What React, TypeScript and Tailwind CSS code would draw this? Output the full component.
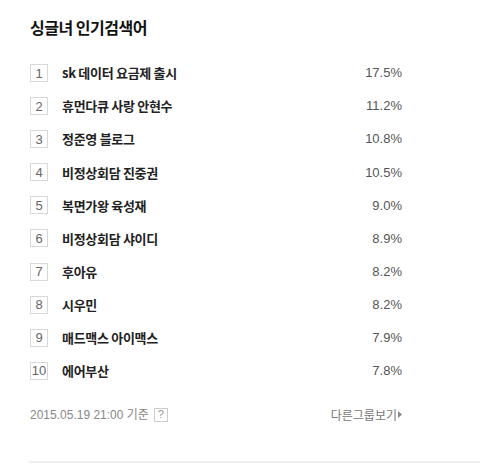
import React from "react";

const items: [string, string][] = [
  ["sk 데이터 요금제 출시", "17.5%"],
  ["휴먼다큐 사랑 안현수", "11.2%"],
  ["정준영 블로그", "10.8%"],
  ["비정상회담 진중권", "10.5%"],
  ["복면가왕 육성재", "9.0%"],
  ["비정상회담 샤이디", "8.9%"],
  ["후아유", "8.2%"],
  ["시우민", "8.2%"],
  ["매드맥스 아이맥스", "7.9%"],
  ["에어부산", "7.8%"],
];

export default function App() {
  return (
    <div className="w-[480px] h-[464px] bg-white overflow-hidden" style={{ fontFamily: '"Noto Sans CJK KR", "Noto Sans", sans-serif' }}>
      <div className="pl-[30px] pr-[78px] pt-[16px]">
        <h1 className="text-[16px] font-bold text-[#111] leading-[22px] tracking-[-0.5px]">싱글녀 인기검색어</h1>
        <ul className="mt-[26px] flex flex-col gap-[15.1px]">
          {items.map(([t, p], i) => (
            <li key={i} className="flex items-center h-[18px]">
              <span
                className="w-[18px] h-[18px] border border-[#d8d8d8] flex items-center justify-center text-[13px] text-[#666] leading-none"
                style={{ fontFamily: '"Liberation Sans", Arial, sans-serif' }}
              >
                {i + 1}
              </span>
              <span className="ml-[14px] text-[13px] font-bold text-[#222] tracking-[-0.3px] flex-1">{t}</span>
              <span
                className="text-[13px] text-[#555]"
                style={{ fontFamily: '"Liberation Sans", Arial, sans-serif' }}
              >
                {p}
              </span>
            </li>
          ))}
        </ul>
        <div className="mt-[26px] flex items-center h-[18px]">
          <span className="text-[12px] text-[#888]" style={{ fontFamily: '"Liberation Sans", "Noto Sans CJK KR", sans-serif' }}>
            2015.05.19 21:00 기준
          </span>
          <span className="ml-[5px] w-[14px] h-[14px] border border-[#ccc] text-[11px] text-[#999] flex items-center justify-center leading-none" style={{ fontFamily: '"Liberation Sans", sans-serif' }}>
            ?
          </span>
          <span className="ml-auto text-[12px] text-[#777] flex items-center">
            다른그룹보기
            <svg width="4" height="7" viewBox="0 0 4 7" className="ml-[1px]">
              <path d="M0 0 L4 3.5 L0 7 Z" fill="#888" />
            </svg>
          </span>
        </div>
      </div>
      <div className="mt-[37px] ml-[29px] h-[2px] bg-[#eeeeee]" />
    </div>
  );
}
